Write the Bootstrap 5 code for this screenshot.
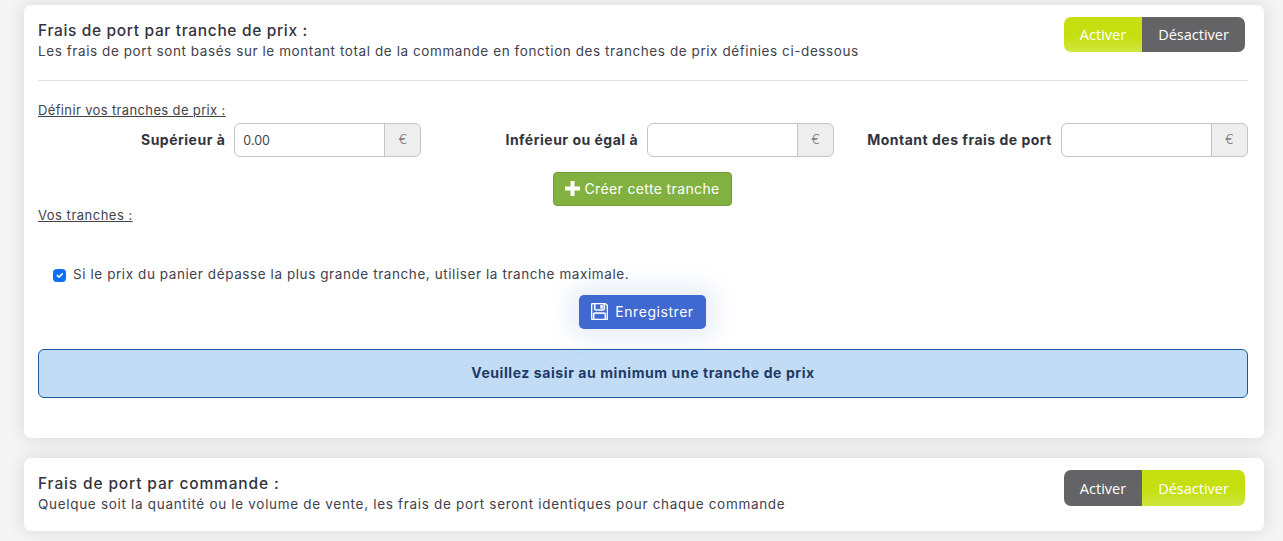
<!DOCTYPE html>
<html lang="fr">
<head>
<meta charset="utf-8">
<title>Frais de port</title>
<link href="https://cdn.jsdelivr.net/npm/bootstrap@5.3.0/dist/css/bootstrap.min.css" rel="stylesheet">
<style>
html,body{height:541px;overflow:hidden}
body{background:#f5f5f5;font-family:"Inter","Noto Sans",sans-serif;font-size:13.5px;color:#42424c;padding:5px 19px 0 24px}
.panel-box{background:#fff;border-radius:7px;padding:12px 16px 12px 14px;box-shadow:0 0 20px rgba(0,0,0,.12)}
.panel-first{height:433px;margin-bottom:20px}
.panel-second{height:73px}
.head-title{font-size:15.5px;font-weight:500;color:#33333d;line-height:20px;margin:4px 0 0;letter-spacing:.66px}
.head-sub{font-size:13.5px;line-height:18px;margin:1px 0 0;letter-spacing:.58px}
.panel-second .head-title{letter-spacing:.86px}
.panel-second .head-sub{letter-spacing:.69px}
.switch-group{width:181px;height:35px;margin-right:3px}
.switch-group .btn{font-family:"Open Sans",sans-serif;font-size:14.5px;color:#fff;border:0;padding:1px 0 0;border-radius:7px;display:flex;align-items:center;justify-content:center}
.switch-on{background:linear-gradient(#c5df10 55%,#cfe63f)!important}
.switch-off{background:#646365!important}
.switch-narrow{width:78px;flex:none!important}
.switch-wide{width:103px;flex:none!important;margin-left:0!important}
.switch-tall{height:36px}
.sep-line{margin:20px 0 0;border-color:#e3e3e3;opacity:1}
.sec-label{text-decoration:underline;line-height:18px;letter-spacing:.5px;font-size:13px}
.sec-first{margin-top:20px;letter-spacing:.36px}
.field-row{margin:4px -16px 0 -14px;height:34px}
.field-col{padding-right:16px;gap:9px}
.field-col:nth-child(2){padding-right:16.6px}
.field-col label{font-weight:700;font-size:14px;color:#33333d;white-space:nowrap;letter-spacing:.5px;margin-bottom:2px}
.field-group{width:187px;height:34px;flex:none}
.field-group .form-control{font-size:12.5px;padding:4px 8px;border-color:#c4c4c4;color:#444;height:34px}
.field-group .input-group-text{width:37px;justify-content:center;padding:0;background:#eee;border-color:#c4c4c4;color:#777;font-size:13px;font-weight:300;height:34px}
.btn-create{background:#82b141;border:1px solid #739f38;color:#fff;font-size:14px;letter-spacing:.37px;height:34px;width:179px;padding:0 0 2px;display:flex;align-items:center;justify-content:center;gap:4px;border-radius:4px}
.btn-save{background:#3f68d0;border:0;color:#fff;font-size:14px;letter-spacing:.55px;height:34px;width:127px;padding:0 0 2px;display:flex;align-items:center;justify-content:center;gap:7px;border-radius:5px;box-shadow:0 0 24px 8px rgba(63,104,208,.13)}
.btn-save svg{stroke:#fff;stroke-width:.5}
.create-wrap{margin-top:15px;padding-right:1px}
.check-line{padding-left:15px;height:18px;line-height:18px;margin-top:42px;gap:7px}
.check-line .form-check-input{width:13px;height:13px;margin:0;flex:none}
.check-line label{letter-spacing:.58px;margin-bottom:2px}
.save-wrap{margin-top:11px;padding-right:1px}
.info-box{height:49px;margin-top:20px;padding-bottom:2px;background:#c2dcf5;border:1px solid #1d5a9e;border-radius:6px;color:#1f3a68;font-weight:700;font-size:14px;letter-spacing:.58px}
</style>
</head>
<body>
<section class="panel-box panel-first">
  <div class="d-flex justify-content-between">
    <div>
      <h2 class="head-title">Frais de port par tranche de prix :</h2>
      <p class="head-sub">Les frais de port sont basés sur le montant total de la commande en fonction des tranches de prix définies ci-dessous</p>
    </div>
    <div class="btn-group switch-group">
      <button type="button" class="btn switch-on switch-narrow">Activer</button>
      <button type="button" class="btn switch-off switch-wide">Désactiver</button>
    </div>
  </div>
  <hr class="sep-line">
  <div class="sec-label sec-first">Définir vos tranches de prix :</div>
  <div class="row g-0 field-row">
    <div class="col-4 d-flex justify-content-end align-items-center field-col">
      <label for="f1">Supérieur à</label>
      <div class="input-group field-group"><input id="f1" class="form-control" value="0.00"><span class="input-group-text">€</span></div>
    </div>
    <div class="col-4 d-flex justify-content-end align-items-center field-col">
      <label for="f2">Inférieur ou égal à</label>
      <div class="input-group field-group"><input id="f2" class="form-control"><span class="input-group-text">€</span></div>
    </div>
    <div class="col-4 d-flex justify-content-end align-items-center field-col">
      <label for="f3">Montant des frais de port</label>
      <div class="input-group field-group"><input id="f3" class="form-control"><span class="input-group-text">€</span></div>
    </div>
  </div>
  <div class="d-flex justify-content-center create-wrap">
    <button type="button" class="btn btn-create">
      <svg width="15" height="15" viewBox="0 0 15 15" aria-hidden="true"><path fill="#fff" d="M5.500 0h4v5.500H15v4H9.500V15h-4V9.500H0v-4h5.500z"/></svg>Créer cette tranche
    </button>
  </div>
  <div class="sec-label">Vos tranches :</div>
  <div class="check-line d-flex align-items-center">
    <input class="form-check-input" type="checkbox" id="c1" checked>
    <label for="c1">Si le prix du panier dépasse la plus grande tranche, utiliser la tranche maximale.</label>
  </div>
  <div class="d-flex justify-content-center save-wrap">
    <button type="button" class="btn btn-save">
      <svg width="17" height="17" viewBox="0 0 16 16" aria-hidden="true" fill="#fff"><path d="M11 2H9v3h2z"/><path d="M1.500 0h11.586a1.500 1.500 0 0 1 1.060.44l1.415 1.414A1.500 1.500 0 0 1 16 2.914V14.500a1.500 1.500 0 0 1-1.500 1.500h-13A1.500 1.500 0 0 1 0 14.500v-13A1.500 1.500 0 0 1 1.500 0M1 1.500v13a.5.5 0 0 0 .5.5H2v-4.500A1.500 1.500 0 0 1 3.500 9h9a1.500 1.500 0 0 1 1.500 1.500V15h.5a.5.5 0 0 0 .5-.5V2.914a.5.5 0 0 0-.146-.353l-1.415-1.415A.5.5 0 0 0 13.086 1H13v4.500A1.500 1.500 0 0 1 11.500 7h-7A1.500 1.500 0 0 1 3 5.500V1H1.500a.5.5 0 0 0-.5.5m3 4a.5.5 0 0 0 .5.5h7a.5.5 0 0 0 .5-.5V1H4zM3 15h10v-4.500a.5.5 0 0 0-.5-.5h-9a.5.5 0 0 0-.5.5z"/></svg>Enregistrer
    </button>
  </div>
  <div class="info-box d-flex align-items-center justify-content-center">Veuillez saisir au minimum une tranche de prix</div>
</section>
<section class="panel-box panel-second">
  <div class="d-flex justify-content-between">
    <div>
      <h2 class="head-title">Frais de port par commande :</h2>
      <p class="head-sub">Quelque soit la quantité ou le volume de vente, les frais de port seront identiques pour chaque commande</p>
    </div>
    <div class="btn-group switch-group switch-tall">
      <button type="button" class="btn switch-off switch-narrow">Activer</button>
      <button type="button" class="btn switch-on switch-wide">Désactiver</button>
    </div>
  </div>
</section>
</body>
</html>
